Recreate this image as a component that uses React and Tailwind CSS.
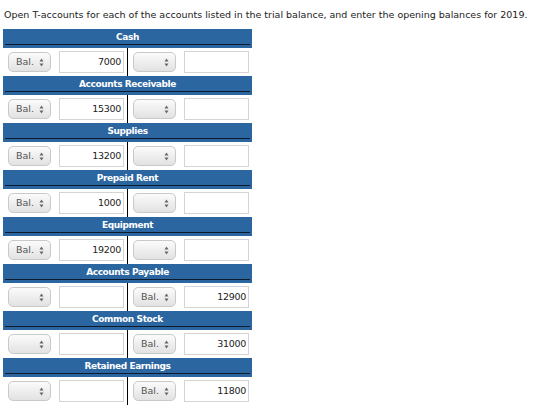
import React from "react";

const accounts = [
  { name: "Cash", side: "left", value: "7000" },
  { name: "Accounts Receivable", side: "left", value: "15300" },
  { name: "Supplies", side: "left", value: "13200" },
  { name: "Prepaid Rent", side: "left", value: "1000" },
  { name: "Equipment", side: "left", value: "19200" },
  { name: "Accounts Payable", side: "right", value: "12900" },
  { name: "Common Stock", side: "right", value: "31000" },
  { name: "Retained Earnings", side: "right", value: "11800" },
];

function Arrows() {
  return (
    <svg width="5" height="9" viewBox="0 0 5 9" className="shrink-0">
      <path d="M2.5 0.5 L4.5 3.5 L0.5 3.5 Z" fill="#666" />
      <path d="M2.5 8.5 L4.5 5.5 L0.5 5.5 Z" fill="#666" />
    </svg>
  );
}

function Select({ label }) {
  return (
    <div className="flex h-[20px] w-[43px] items-center justify-between rounded-[5px] border border-[#c9c9c9] bg-gradient-to-b from-[#fbfbfb] to-[#e2e2e2] pl-[7px] pr-[6px] text-[9.5px] text-[#555]">
      <span>{label}</span>
      <Arrows />
    </div>
  );
}

function Field({ value }) {
  return (
    <div className="flex h-[22px] w-[65px] items-center justify-end border border-[#d4d4d4] bg-white pr-[2px] pt-[1px] text-[9.5px] tracking-[-0.3px] text-[#222]">
      {value}
    </div>
  );
}

function Side({ label, value }) {
  return (
    <div className="flex w-[124px] items-center gap-[8px] pl-[5px]">
      <Select label={label} />
      <Field value={value} />
    </div>
  );
}

function TAccount({ name, side, value }) {
  const left = side === "left";
  return (
    <div>
      <div className="h-[19px] bg-[#2c66a1]">
        <div className="flex h-[15px] items-center justify-center pt-[2px] text-[9px] font-bold leading-none tracking-[-0.4px] text-white">
          {name}
        </div>
        <div className="mx-[2px] h-px bg-[#0b1a2c]" />
      </div>
      <div className="flex h-[28px]">
        <Side label={left ? "Bal." : ""} value={left ? value : ""} />
        <div className="w-px bg-black" />
        <Side label={left ? "" : "Bal."} value={left ? "" : value} />
      </div>
    </div>
  );
}

export default function App() {
  return (
    <div className="h-[419px] w-[560px] bg-white font-['DejaVu_Sans',Verdana,sans-serif]">
      <p className="pl-[4px] pt-[9px] text-[9.5px] leading-[12px] text-[#222]">
        Open T-accounts for each of the accounts listed in the trial balance, and enter the opening balances for 2019.
      </p>
      <div className="ml-[3px] mt-[8px] w-[249px]">
        {accounts.map((a) => (
          <TAccount key={a.name} {...a} />
        ))}
      </div>
    </div>
  );
}
